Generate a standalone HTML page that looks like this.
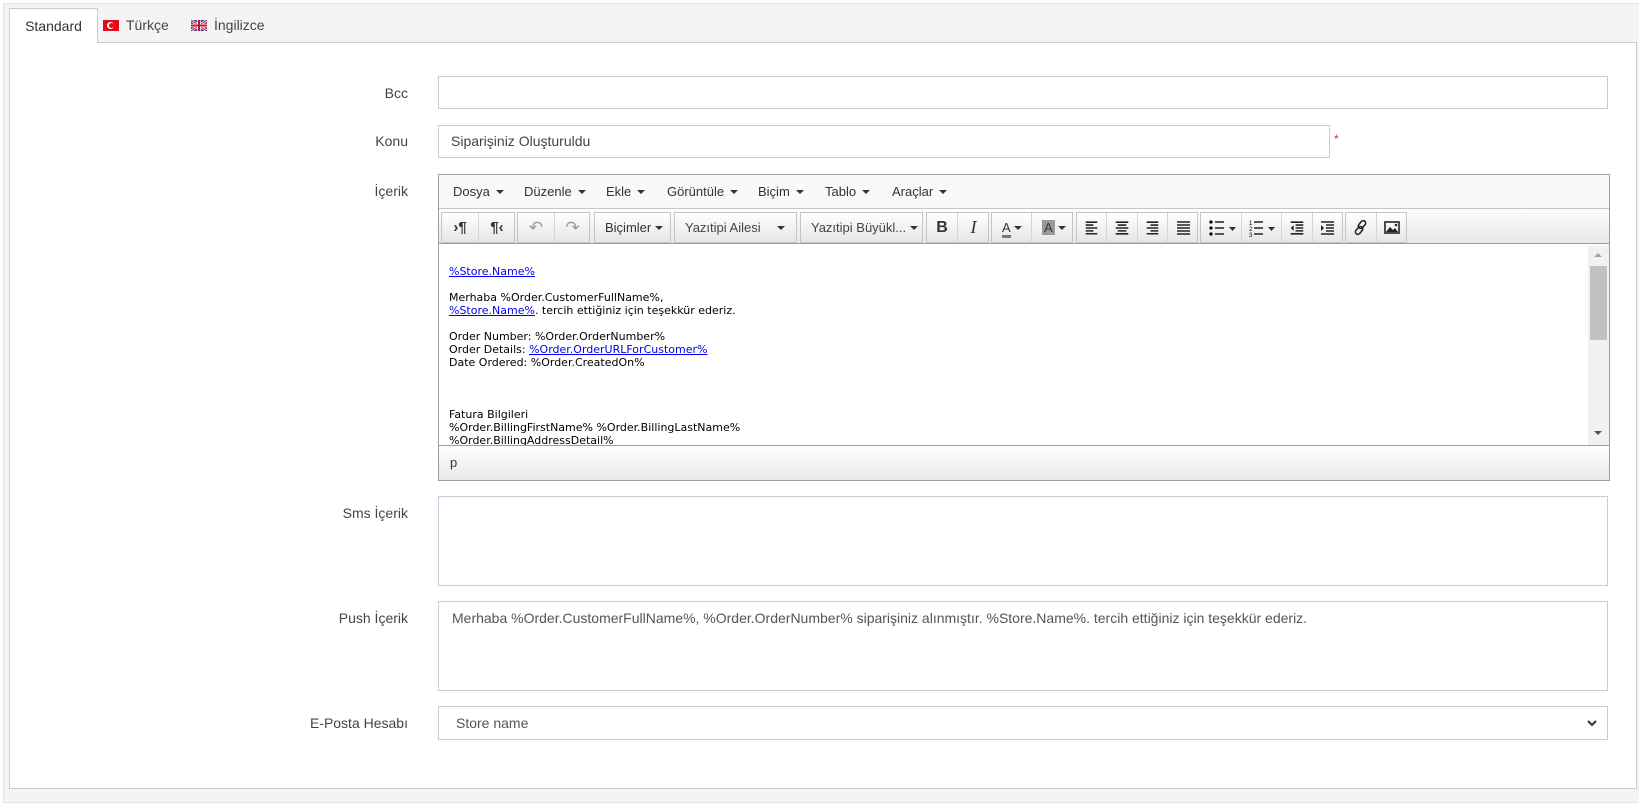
<!DOCTYPE html>
<html><head><meta charset="utf-8"><style>
*{box-sizing:border-box;margin:0;padding:0}
body{width:1639px;height:789px;background:#fff;position:relative;overflow:hidden;font-family:"Liberation Sans",sans-serif;}
.a{position:absolute}
.outer{left:3px;top:3px;width:1650px;height:800px;background:#f4f4f4;border:1px solid #e3e3e3}
.panel{left:9px;top:42px;width:1628px;height:747px;background:#fff;border:1px solid #ccc}
.tab{top:8px;height:35px;font-size:14px;color:#444;line-height:34px}
.lbl{width:200px;text-align:right;left:208px;font-size:14px;color:#444}
.inp{border:1px solid #c6ccd8;background:#fff;left:438px;width:1170px}
.mi{font-size:13px;color:#333;top:184px;font-family:"Liberation Sans",sans-serif}
.mi:after{content:"";display:inline-block;margin-left:6px;border-left:4px solid transparent;border-right:4px solid transparent;border-top:4px solid #333;vertical-align:2px}
.grp{top:212px;height:31px;border:1px solid #c5c5c5;background:linear-gradient(#fff,#e6e6e6)}
.btn{position:absolute;top:0;height:29px;border-right:1px solid #d5d5d5;font-size:13px;color:#333;line-height:29px}
.btn:last-child{border-right:none}
.ct{left:439px;top:245px;width:1149px;height:200px;overflow:hidden;padding:20px 0 0 10px;font-family:"DejaVu Sans",Verdana,sans-serif;font-size:11px;color:#000;line-height:13px}
.ct a{color:#00e;text-decoration:underline}
.caret{display:inline-block;border-left:4px solid transparent;border-right:4px solid transparent;border-top:4px solid #333;vertical-align:2px}
</style></head><body>
<div class="a outer"></div>
<div class="a panel"></div>
<div class="a tab" style="left:9px;width:89px;background:#fff;border:1px solid #ccc;border-bottom:none;text-align:center;color:#333">Standard</div>
<div class="a tab" style="left:103px;"><span style="display:inline-block;width:16px;height:11px;background:#e30a17;vertical-align:-1px;margin-right:7px;position:relative"><span style="position:absolute;left:4px;top:2px;width:7px;height:7px;border-radius:50%;background:#fff"></span><span style="position:absolute;left:6px;top:3px;width:5px;height:5px;border-radius:50%;background:#e30a17"></span></span>Türkçe</div>
<div class="a tab" style="left:191px;"><svg width="16" height="11" style="vertical-align:-1px;margin-right:7px"><rect width="16" height="11" fill="#2a3f8f"/><path d="M0 0L16 11M16 0L0 11" stroke="#fff" stroke-width="2.5"/><path d="M0 0L16 11M16 0L0 11" stroke="#c8102e" stroke-width="1"/><path d="M8 0V11M0 5.5H16" stroke="#fff" stroke-width="3.5"/><path d="M8 0V11M0 5.5H16" stroke="#c8102e" stroke-width="2"/></svg>İngilizce</div>

<div class="a lbl" style="top:85px">Bcc</div>
<div class="a inp" style="top:76px;height:33px"></div>
<div class="a lbl" style="top:133px">Konu</div>
<div class="a inp" style="top:125px;height:33px;width:892px;font-size:14px;color:#444;padding:7px 12px">Siparişiniz Oluşturuldu</div>
<div class="a" style="left:1334px;top:132px;color:#c0392b;font-size:12px">*</div>
<div class="a lbl" style="top:183px">İçerik</div>

<div class="a" style="left:438px;top:174px;width:1172px;height:307px;border:1px solid #9e9e9e;background:#fff"></div>
<div class="a" style="left:439px;top:175px;width:1170px;height:34px;background:#f9f9f9;border-bottom:1px solid #c5c5c5"></div>
<div class="a" style="left:439px;top:209px;width:1170px;height:35px;background:linear-gradient(#fdfdfd,#e8e8e8);border-bottom:1px solid #9e9e9e"></div>
<div class="a mi" style="left:453px">Dosya</div>
<div class="a mi" style="left:524px">Düzenle</div>
<div class="a mi" style="left:606px">Ekle</div>
<div class="a mi" style="left:667px">Görüntüle</div>
<div class="a mi" style="left:758px">Biçim</div>
<div class="a mi" style="left:825px">Tablo</div>
<div class="a mi" style="left:892px">Araçlar</div>

<div class="a grp" style="left:441px;width:74px"><div class="btn" style="left:0;width:37px;text-align:center;font-weight:bold;font-size:15px">›¶</div><div class="btn" style="left:37px;width:36px;text-align:center;font-weight:bold;font-size:15px">¶‹</div></div>
<div class="a grp" style="left:517px;width:73px"><div class="btn" style="left:0;width:37px;text-align:center;color:#999;font-size:17px">↶</div><div class="btn" style="left:37px;width:35px;text-align:center;color:#999;font-size:17px">↷</div></div>
<div class="a grp" style="left:594px;width:77px"><div class="btn" style="left:10px;width:66px">Biçimler <span class="caret"></span></div></div>
<div class="a grp" style="left:674px;width:123px"><div class="btn" style="left:10px;width:112px;color:#444">Yazıtipi Ailesi<span class="caret" style="position:absolute;right:12px;top:13px"></span></div></div>
<div class="a grp" style="left:800px;width:123px"><div class="btn" style="left:10px;width:112px;color:#444">Yazıtipi Büyükl... <span class="caret"></span></div></div>
<div class="a grp" style="left:926px;width:63px"><div class="btn" style="left:0;width:31px;text-align:center;font-weight:bold;font-size:16px">B</div><div class="btn" style="left:31px;width:31px;text-align:center;font-style:italic;font-family:'Liberation Serif',serif;font-size:18px">I</div></div>
<div class="a grp" style="left:991px;width:82px"><div class="btn" style="left:0;width:40px;padding-left:10px"><span style="border-bottom:3px solid #777;line-height:14px;display:inline-block">A</span> <span class="caret"></span></div><div class="btn" style="left:40px;width:41px;padding-left:10px"><span style="background:#999;padding:0 2px;line-height:15px;display:inline-block">A</span> <span class="caret"></span></div></div>
<div class="a grp" style="left:1076px;width:122px">
<svg class="btn" style="left:0;width:30px" viewBox="0 0 30 29"><path d="M9 9h12M9 12h8M9 15h12M9 18h8M9 21h12" stroke="#222" stroke-width="1.6"/></svg>
<svg class="btn" style="left:30px;width:31px" viewBox="0 0 31 29"><path d="M9 9h13M11 12h9M9 15h13M11 18h9M9 21h13" stroke="#222" stroke-width="1.6"/></svg>
<svg class="btn" style="left:61px;width:30px" viewBox="0 0 30 29"><path d="M9 9h12M13 12h8M9 15h12M13 18h8M9 21h12" stroke="#222" stroke-width="1.6"/></svg>
<svg class="btn" style="left:91px;width:30px" viewBox="0 0 30 29"><path d="M9 9h13M9 12h13M9 15h13M9 18h13M9 21h13" stroke="#222" stroke-width="1.6"/></svg></div>
<div class="a grp" style="left:1200px;width:143px">
<div class="btn" style="left:0;width:41px"><svg width="41" height="29"><circle cx="10" cy="9" r="1.6"/><circle cx="10" cy="15" r="1.6"/><circle cx="10" cy="21" r="1.6"/><path d="M14 9h9M14 15h9M14 21h9" stroke="#222" stroke-width="1.6"/><path d="M28 14h7l-3.5 4z" fill="#333"/></svg></div>
<div class="btn" style="left:41px;width:40px"><svg width="40" height="29"><text x="7" y="12" font-size="6" font-family="Liberation Sans">1</text><text x="7" y="18" font-size="6" font-family="Liberation Sans">2</text><text x="7" y="24" font-size="6" font-family="Liberation Sans">3</text><path d="M12 9h9M12 15h9M12 21h9" stroke="#222" stroke-width="1.6"/><path d="M26 14h7l-3.5 4z" fill="#333"/></svg></div>
<svg class="btn" style="left:81px;width:31px" viewBox="0 0 31 29"><path d="M9 9h13M14 12h8M14 15h8M14 18h8M9 21h13" stroke="#222" stroke-width="1.6"/><path d="M12 12v6l-3-3z" fill="#222"/></svg>
<svg class="btn" style="left:112px;width:30px" viewBox="0 0 30 29"><path d="M8 9h13M13 12h8M13 15h8M13 18h8M8 21h13" stroke="#222" stroke-width="1.6"/><path d="M8 12v6l3-3z" fill="#222"/></svg></div>
<div class="a grp" style="left:1345px;width:62px">
<svg class="btn" style="left:0;width:31px" viewBox="0 0 31 29"><g fill="none" stroke="#222" stroke-width="1.6"><rect x="14" y="7" width="5" height="9" rx="2.5" transform="rotate(40 16.5 11.5)"/><rect x="11" y="13" width="5" height="9" rx="2.5" transform="rotate(40 13.5 17.5)"/></g></svg>
<svg class="btn" style="left:31px;width:30px" viewBox="0 0 30 29"><rect x="8" y="9" width="14" height="11" fill="none" stroke="#222" stroke-width="1.6"/><path d="M9 19l4-5 3 3 2-2 3 4z" fill="#222"/><circle cx="19" cy="12" r="1.3" fill="#222"/></svg></div>

<div class="a ct"><a>%Store.Name%</a><br><br>Merhaba %Order.CustomerFullName%,<br><a>%Store.Name%</a>. tercih ettiğiniz için teşekkür ederiz.<br><br>Order Number: %Order.OrderNumber%<br>Order Details: <a>%Order.OrderURLForCustomer%</a><br>Date Ordered: %Order.CreatedOn%<br><br><br><br>Fatura Bilgileri<br>%Order.BillingFirstName% %Order.BillingLastName%<br>%Order.BillingAddressDetail%<br>%Order.BillingCity%</div>
<div class="a" style="left:1588px;top:245px;width:21px;height:200px;background:#f1f1f1"></div>
<div class="a" style="left:1590px;top:266px;width:17px;height:74px;background:#c1c1c1"></div>
<div class="a" style="left:1594px;top:253px;border-left:4px solid transparent;border-right:4px solid transparent;border-bottom:4px solid #a3a3a3"></div>
<div class="a" style="left:1594px;top:431px;border-left:4px solid transparent;border-right:4px solid transparent;border-top:4px solid #505050"></div>
<div class="a" style="left:439px;top:445px;width:1170px;height:35px;border-top:1px solid #9e9e9e;background:linear-gradient(#fdfdfd,#e8e8e8);font-size:13px;color:#333;padding:9px 11px">p</div>

<div class="a lbl" style="top:505px">Sms İçerik</div>
<div class="a inp" style="top:496px;height:90px"></div>
<div class="a lbl" style="top:610px">Push İçerik</div>
<div class="a inp" style="top:601px;height:90px;font-size:14px;color:#555;padding:8px 13px">Merhaba %Order.CustomerFullName%, %Order.OrderNumber% siparişiniz alınmıştır. %Store.Name%. tercih ettiğiniz için teşekkür ederiz.</div>
<div class="a lbl" style="top:715px">E-Posta Hesabı</div>
<div class="a inp" style="top:706px;height:34px;font-size:14px;color:#555;padding:8px 17px">Store name</div>
<svg class="a" style="left:1586px;top:719px" width="12" height="8"><path d="M2 2l4 4 4-4" fill="none" stroke="#333" stroke-width="2"/></svg>
</body></html>
